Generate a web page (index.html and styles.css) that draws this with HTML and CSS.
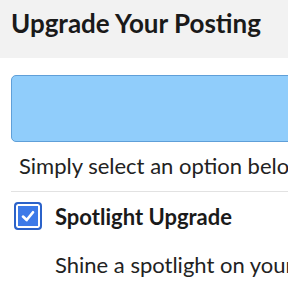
FILE: index.html
```html
<!DOCTYPE html>
<html lang="en">

<head>
    <meta charset="UTF-8">
    <meta name="viewport" content="width=device-width, initial-scale=1.0">
    <title>Upgrade Your Posting</title>
    <link rel="stylesheet" href="styles.css">
</head>

<body>
    <div class="header">
        <h1>Upgrade Your Posting</h1>
    </div>

    <div class="content">
        <div class="notice"></div>

        <p class="intro">Simply select an option below to upgrade your posting.</p>

        <div class="option">
            <div class="option-row">
                <span class="checkbox">
                    <svg width="20" height="20" viewBox="0 0 18 18">
                        <path d="M4.5 9.5 L7.8 12.6 L13.5 5.6" fill="none" stroke="#fff" stroke-width="2.4" stroke-linecap="round" stroke-linejoin="round" />
                    </svg>
                </span>
                <span class="option-title">Spotlight Upgrade</span>
            </div>
            <p class="option-desc">Shine a spotlight on your posting</p>
        </div>
    </div>
</body>

</html>
```

FILE: styles.css
```css
body {
    margin: 0;
    font-family: Lato, "Open Sans", sans-serif;
    color: #222;
    background-color: #fff;
    overflow: hidden;
}

.header {
    height: 58px;
    box-sizing: border-box;
    background-color: #f2f2f2;
    padding: 8px 11px 0;
}

.header h1 {
    margin: 0;
    font-size: 26px;
    line-height: 31px;
    font-weight: 700;
    color: #1a1a1a;
}

.content {
    width: 480px;
    padding: 17px 0 0 11px;
}

.notice {
    height: 65px;
    background-color: #90cdfb;
    border: 1px solid #5f9fd8;
    border-radius: 5px;
}

.intro {
    margin: 10px 0 0 8px;
    font-size: 22px;
    line-height: 28px;
    white-space: nowrap;
}

.option {
    margin-top: 11px;
    border-top: 1px solid #e2e2e2;
}

.option-row {
    display: flex;
    align-items: center;
    gap: 13px;
    padding: 10px 0 0 3px;
}

.checkbox {
    width: 28px;
    height: 28px;
    box-sizing: border-box;
    border: 2px solid #2b62c9;
    border-radius: 4px;
    background-color: #3d7ae8;
    box-shadow: inset 0 0 0 2px #fff;
    display: flex;
    align-items: center;
    justify-content: center;
}

.option-title {
    font-size: 22px;
    font-weight: 700;
    color: #1a1a1a;
}

.option-desc {
    margin: 21px 0 0 44px;
    font-size: 22px;
    line-height: 28px;
    white-space: nowrap;
}
```
